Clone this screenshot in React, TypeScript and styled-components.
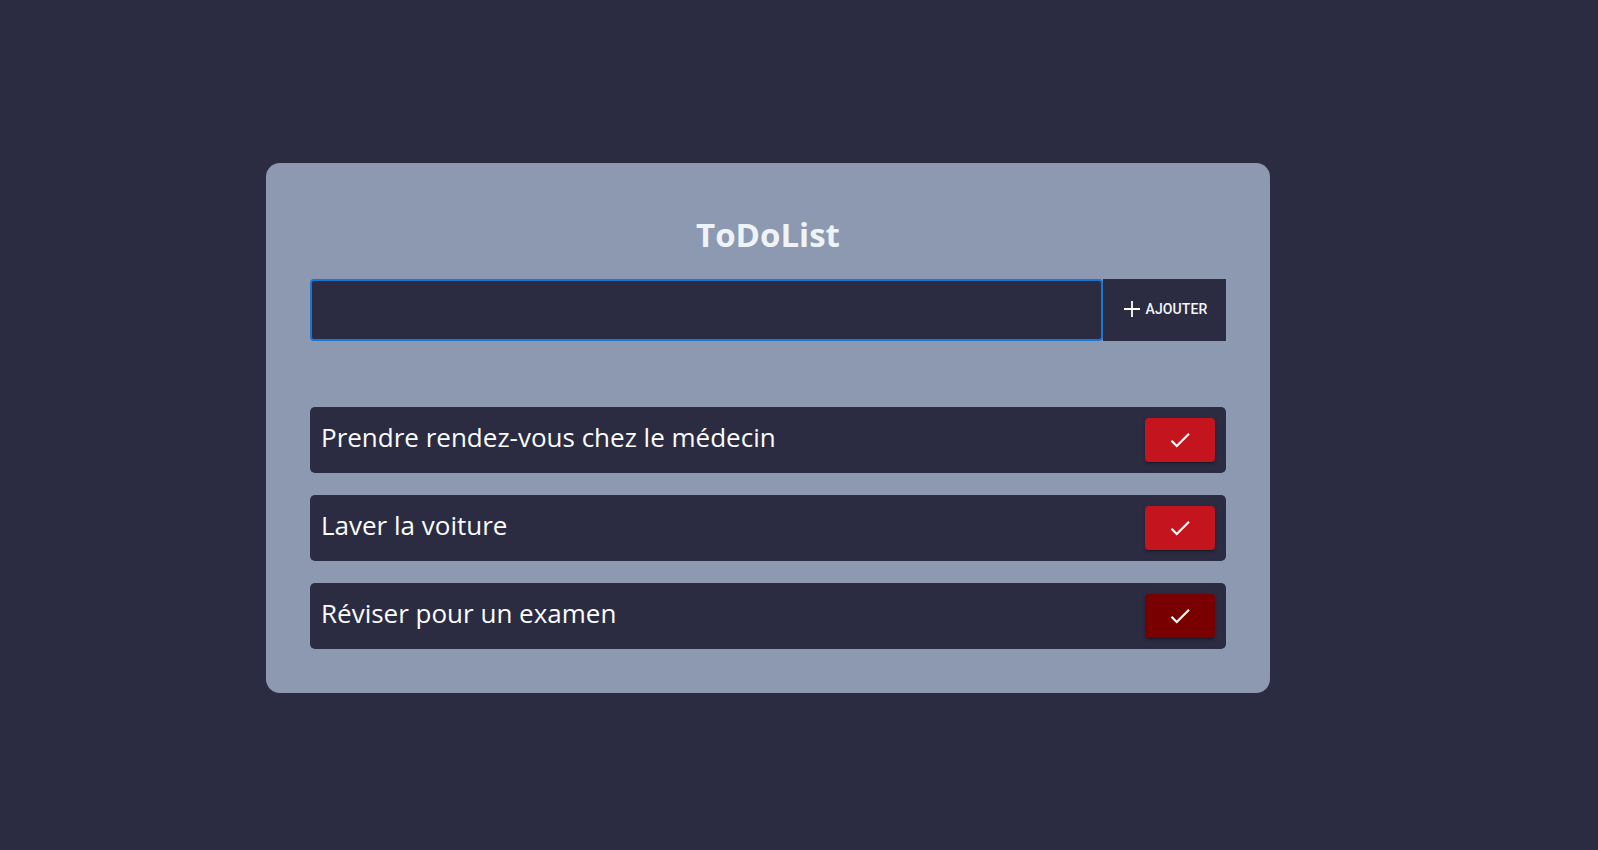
import styled, { createGlobalStyle } from "styled-components";

const GlobalStyle = createGlobalStyle`
  body {
    margin: 0;
    background-color: #2b2c42;
    font-family: "Open Sans", "Noto Sans", sans-serif;
  }
`;

const Page = styled.div`
  min-height: 850px;
  padding: 163px 0 0 266px;
  box-sizing: border-box;
`;

const Card = styled.div`
  width: 1004px;
  box-sizing: border-box;
  background-color: #8c99b0;
  border-radius: 14px;
  padding: 44px;
  display: flex;
  flex-direction: column;
`;

const Title = styled.h1`
  margin: 5px 0 22px;
  text-align: center;
  font-size: 33px;
  font-weight: 700;
  color: #eef3f7;
  line-height: 45px;
`;

const Form = styled.div`
  display: flex;
  height: 62px;
`;

const Input = styled.input`
  flex: 1;
  box-sizing: border-box;
  background-color: #2b2c42;
  border: 2px solid #1976d2;
  border-radius: 4px;
  outline: none;
  color: #fff;
  font-size: 18px;
  padding: 0 14px;
`;

const AddButton = styled.button`
  width: 123px;
  background-color: #2b2c42;
  border: none;
  color: #f4f6fa;
  font-family: Roboto, sans-serif;
  font-weight: 500;
  font-size: 14px;
  letter-spacing: 0.1px;
  text-transform: uppercase;
  display: flex;
  align-items: center;
  justify-content: center;
  gap: 6px;
  padding: 0 0 2px 2px;
  cursor: pointer;
`;

const List = styled.ul`
  list-style: none;
  margin: 66px 0 0;
  padding: 0;
  display: flex;
  flex-direction: column;
  gap: 22px;
`;

const Item = styled.li`
  height: 66px;
  background-color: #2b2c42;
  border-radius: 5px;
  display: flex;
  align-items: center;
  justify-content: space-between;
  padding: 0 11px;
  color: #fbfcfd;
  font-size: 26px;
`;

const Label = styled.span`
  padding-bottom: 6px;
`;

const CheckButton = styled.button<{ $done?: boolean }>`
  width: 70px;
  height: 44px;
  border: none;
  border-radius: 4px;
  background-color: ${(p) => (p.$done ? "#790000" : "#c4151f")};
  box-shadow: 0 3px 1px -2px rgba(0, 0, 0, 0.2), 0 2px 2px 0 rgba(0, 0, 0, 0.14),
    0 1px 5px 0 rgba(0, 0, 0, 0.12);
  display: flex;
  align-items: center;
  justify-content: center;
  cursor: pointer;
`;

const todos = [
  { id: 1, text: "Prendre rendez-vous chez le médecin", done: false },
  { id: 2, text: "Laver la voiture", done: false },
  { id: 3, text: "Réviser pour un examen", done: true },
];

const App = () => {
  return (
    <Page>
      <GlobalStyle />
      <Card>
        <Title>ToDoList</Title>
        <Form>
          <Input type="text" />
          <AddButton>
            <svg width="16" height="16" viewBox="0 0 16 16">
              <path d="M8 0v16M0 8h16" stroke="#fff" strokeWidth="1.8" />
            </svg>
            Ajouter
          </AddButton>
        </Form>
        <List>
          {todos.map((t) => (
            <Item key={t.id}>
              <Label>{t.text}</Label>
              <CheckButton $done={t.done}>
                <svg width="26" height="26" viewBox="0 0 24 24" fill="#fff">
                  <path d="M9 16.17 4.83 12l-1.42 1.41L9 19 21 7l-1.41-1.41z" />
                </svg>
              </CheckButton>
            </Item>
          ))}
        </List>
      </Card>
    </Page>
  );
};

export default App;
